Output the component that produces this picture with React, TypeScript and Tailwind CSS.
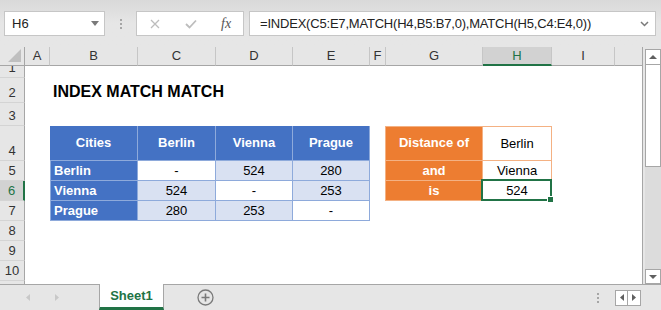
import React from 'react';

const cols = ['A', 'B', 'C', 'D', 'E', 'F', 'G', 'H', 'I'];
const rowNums = [1, 2, 3, 4, 5, 6, 7, 8, 9, 10];

function Dots() {
  return (
    <div className="flex flex-col gap-[2px]">
      <span className="w-[2px] h-[2px] bg-[#a6a6a6]" />
      <span className="w-[2px] h-[2px] bg-[#a6a6a6]" />
      <span className="w-[2px] h-[2px] bg-[#a6a6a6]" />
    </div>
  );
}

function TopBar() {
  return (
    <div className="h-[47px] flex items-start pt-[11px] bg-gradient-to-b from-[#d9d9d9] via-[#e6e6e6] to-[#e6e6e6] shrink-0">
      <div className="ml-[4px] w-[101px] h-[25px] bg-white border border-[#c6c6c6] flex items-center justify-between pl-[7px] pr-[5px]">
        <span className="text-[13px] text-[#222]">H6</span>
        <svg width="8" height="5" viewBox="0 0 8 5"><path d="M0 0h8L4 5z" fill="#7a7a7a" /></svg>
      </div>
      <div className="ml-[15px] mt-[8px]"><Dots /></div>
      <div className="ml-[14px] w-[108px] h-[25px] bg-white border border-[#c6c6c6] flex items-center">
        <svg className="ml-[13px]" width="10" height="10" viewBox="0 0 10 10">
          <path d="M1 1l8 8M9 1l-8 8" stroke="#bdbdbd" strokeWidth="1.3" />
        </svg>
        <svg className="ml-[25px]" width="12" height="10" viewBox="0 0 12 10">
          <path d="M1 5l3.5 3.5L11 1.5" stroke="#bdbdbd" strokeWidth="1.8" fill="none" />
        </svg>
        <span className="ml-[24px] text-[14px] italic text-[#555] font-['Liberation_Serif',serif]">fx</span>
      </div>
      <div className="ml-[5px] w-[407px] h-[25px] bg-white border border-[#c6c6c6] flex items-center justify-between pl-[10px] pr-[6px]">
        <span className="text-[13px] text-[#222] whitespace-nowrap tracking-[-0.2px]">
          =INDEX(C5:E7,MATCH(H4,B5:B7,0),MATCH(H5,C4:E4,0))
        </span>
        <svg width="9" height="6" viewBox="0 0 9 6"><path d="M1 1l3.5 3.5L8 1" stroke="#7a7a7a" strokeWidth="1.5" fill="none" /></svg>
      </div>
    </div>
  );
}

function BlueCell({ row, col, children, kind }: { row: string; col: string; children: React.ReactNode; kind: 'head' | 'side' | 'light' | 'white' }) {
  const base = 'border-r border-b border-[#8eaadb] flex items-center text-[13px]';
  const styles = {
    head: 'bg-[#4472c4] text-white font-bold justify-center',
    side: 'bg-[#4472c4] text-white font-bold pl-[3px] border-l',
    light: 'bg-[#d9e1f2] text-black justify-center',
    white: 'bg-white text-black justify-center',
  };
  return <div className={`${row} ${col} ${base} ${styles[kind]}`}>{children}</div>;
}

function Sheet() {
  return (
    <div className="w-[643px] border-r border-[#a6a6a6] bg-white grid grid-cols-[25px_25px_88px_78px_77px_77px_16px_97px_69px_63px_27px] grid-rows-[19px_12px_25px_23px_35px_20px_20px_20px_20px_20px_20px_3px]">
      {/* corner */}
      <div className="row-start-1 col-start-1 bg-[#e6e6e6] border-r border-b border-[#a6a6a6] flex items-end justify-end pr-[3px] pb-[3px]">
        <svg width="13" height="13" viewBox="0 0 13 13"><path d="M13 0v13H0z" fill="#bfbfbf" /></svg>
      </div>
      {cols.map((c) =>
        c === 'H' ? (
          <div key={c} className="row-start-1 bg-[#d2d2d2] border-r border-[#c6c6c6] border-b-2 border-b-[#217346] flex items-center justify-center text-[13px] text-[#217346]">
            {c}
          </div>
        ) : (
          <div key={c} className="row-start-1 bg-[#e6e6e6] border-r border-[#c6c6c6] border-b border-b-[#a6a6a6] flex items-center justify-center text-[13px] text-[#333]">
            {c}
          </div>
        )
      )}
      <div className="row-start-1 col-start-11 bg-[#e6e6e6] border-b border-[#a6a6a6]" />

      {rowNums.map((n, i) =>
        n === 6 ? (
          <div key={n} style={{ gridRowStart: i + 2 }} className="col-start-1 bg-[#d2d2d2] border-b border-[#d4d4d4] border-r-2 border-r-[#217346] flex items-end justify-center pb-[1px] overflow-hidden text-[13px] leading-[16px] text-[#217346]">
            {n}
          </div>
        ) : (
          <div key={n} style={{ gridRowStart: i + 2 }} className="col-start-1 bg-[#e6e6e6] border-b border-[#d4d4d4] border-r border-r-[#a6a6a6] flex items-end justify-center pb-[1px] overflow-hidden text-[13px] leading-[16px] text-[#333]">
            {n}
          </div>
        )
      )}
      <div className="row-start-12 col-start-1 bg-[#e6e6e6] border-r border-[#a6a6a6]" />

      {/* title */}
      <div className="row-start-3 col-start-3 col-span-4 flex items-center pl-[3px] pt-[2px] text-[16px] font-bold text-black whitespace-nowrap">
        INDEX MATCH MATCH
      </div>

      {/* blue table */}
      <BlueCell row="row-start-5" col="col-start-3" kind="head"><span className="pl-0 border-l-0">Cities</span></BlueCell>
      <BlueCell row="row-start-5" col="col-start-4" kind="head">Berlin</BlueCell>
      <BlueCell row="row-start-5" col="col-start-5" kind="head">Vienna</BlueCell>
      <BlueCell row="row-start-5" col="col-start-6" kind="head">Prague</BlueCell>

      <BlueCell row="row-start-6" col="col-start-3" kind="side">Berlin</BlueCell>
      <BlueCell row="row-start-6" col="col-start-4" kind="white">-</BlueCell>
      <BlueCell row="row-start-6" col="col-start-5" kind="light">524</BlueCell>
      <BlueCell row="row-start-6" col="col-start-6" kind="light">280</BlueCell>

      <BlueCell row="row-start-7" col="col-start-3" kind="side">Vienna</BlueCell>
      <BlueCell row="row-start-7" col="col-start-4" kind="light">524</BlueCell>
      <BlueCell row="row-start-7" col="col-start-5" kind="white">-</BlueCell>
      <BlueCell row="row-start-7" col="col-start-6" kind="light">253</BlueCell>

      <BlueCell row="row-start-8" col="col-start-3" kind="side">Prague</BlueCell>
      <BlueCell row="row-start-8" col="col-start-4" kind="light">280</BlueCell>
      <BlueCell row="row-start-8" col="col-start-5" kind="light">253</BlueCell>
      <BlueCell row="row-start-8" col="col-start-6" kind="white">-</BlueCell>

      {/* orange table */}
      <div className="row-start-5 col-start-8 bg-[#ed7d31] border-l border-b border-r border-[#f4b183] -ml-px flex items-center justify-center text-[13px] font-bold text-white">Distance of</div>
      <div className="row-start-5 col-start-9 bg-white border-t border-b border-r border-[#f4b183] flex items-center justify-center text-[13px] text-black">Berlin</div>
      <div className="row-start-6 col-start-8 bg-[#ed7d31] border-l border-b border-r border-[#f4b183] -ml-px flex items-center justify-center text-[13px] font-bold text-white">and</div>
      <div className="row-start-6 col-start-9 bg-white border-b border-r border-[#f4b183] flex items-center justify-center text-[13px] text-black">Vienna</div>
      <div className="row-start-7 col-start-8 bg-[#ed7d31] border-l border-b border-r border-[#f4b183] -ml-px flex items-center justify-center text-[13px] font-bold text-white">is</div>
      <div className="row-start-7 col-start-9 relative bg-white border-b border-r border-[#f4b183] flex items-center justify-center text-[13px] text-black">
        524
        <div className="absolute -left-[2px] -top-[2px] -right-px -bottom-px border-2 border-[#217346]" />
        <div className="absolute -right-[3px] -bottom-[3px] w-[5px] h-[5px] bg-[#217346] border border-white box-content" />
      </div>
      <div className="row-start-5 col-start-8 col-span-2 border-t border-[#f4b183] -ml-px pointer-events-none" />
    </div>
  );
}

function Scrollbar() {
  return (
    <div className="ml-[2px] mt-[2px] w-[16px] flex flex-col bg-[#dcdcdc]">
      <div className="h-[16px] bg-white border border-[#a6a6a6] flex items-center justify-center">
        <svg width="8" height="4" viewBox="0 0 8 4"><path d="M0 4h8L4 0z" fill="#606060" /></svg>
      </div>
      <div className="h-[102px] bg-white border border-t-0 border-[#a6a6a6]" />
      <div className="flex-1" />
      <div className="h-[15px] bg-white border border-[#a6a6a6] flex items-center justify-center">
        <svg width="8" height="4" viewBox="0 0 8 4"><path d="M0 0h8L4 4z" fill="#606060" /></svg>
      </div>
    </div>
  );
}

function TabBar() {
  return (
    <div className="h-[26px] border-t border-[#a6a6a6] flex items-stretch shrink-0">
      <div className="w-[99px] flex items-center">
        <svg className="ml-[26px]" width="4" height="7" viewBox="0 0 4 7"><path d="M4 0v7L0 3.5z" fill="#c8c8c8" /></svg>
        <svg className="ml-[25px]" width="4" height="7" viewBox="0 0 4 7"><path d="M0 0v7l4-3.5z" fill="#c8c8c8" /></svg>
      </div>
      <div className="w-[65px] -mt-px bg-white border-l border-r border-[#a6a6a6] border-b-[3px] border-b-[#217346] flex items-center justify-center text-[13px] font-bold text-[#217346]">
        Sheet1
      </div>
      <div className="ml-[33px] flex items-center">
        <svg width="17" height="17" viewBox="0 0 17 17">
          <circle cx="8.5" cy="8.5" r="7.5" stroke="#7a7a7a" strokeWidth="1.3" fill="none" />
          <path d="M8.5 4.5v8M4.5 8.5h8" stroke="#7a7a7a" strokeWidth="1.6" />
        </svg>
      </div>
      <div className="ml-auto flex items-center">
        <Dots />
        <div className="ml-[16px] flex h-[16px]">
          <div className="w-[13px] bg-white border border-[#a6a6a6] flex items-center justify-center">
            <svg width="4" height="7" viewBox="0 0 4 7"><path d="M4 0v7L0 3.5z" fill="#606060" /></svg>
          </div>
          <div className="w-[13px] bg-white border border-l-0 border-[#a6a6a6] flex items-center justify-center">
            <svg width="4" height="7" viewBox="0 0 4 7"><path d="M0 0v7l4-3.5z" fill="#606060" /></svg>
          </div>
        </div>
        <div className="w-[20px]" />
      </div>
    </div>
  );
}

export default function App() {
  return (
    <div className="w-[661px] h-[310px] bg-[#e6e6e6] flex flex-col overflow-hidden font-['Liberation_Sans',Arial,sans-serif]">
      <TopBar />
      <div className="flex h-[237px] shrink-0">
        <Sheet />
        <Scrollbar />
      </div>
      <TabBar />
    </div>
  );
}
